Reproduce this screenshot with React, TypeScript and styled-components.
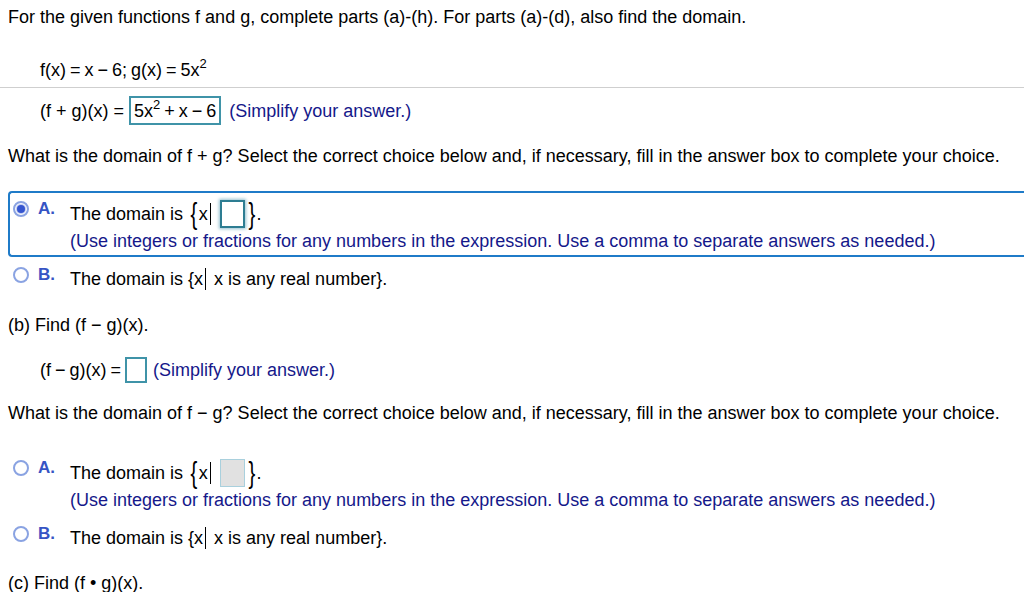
import styled, { createGlobalStyle } from "styled-components";

const GlobalStyle = createGlobalStyle`
  body {
    margin: 0;
    background: #fff;
    overflow: hidden;
    font-family: "Liberation Sans", Arial, Helvetica, sans-serif;
    color: #000;
  }
`;

const Page = styled.div`
  width: 1060px;
  padding-top: 8px;
  font-size: 18px;
  line-height: 20px;
  display: flex;
  flex-direction: column;
`;

const TextRow = styled.div<{ $indent?: number; $top?: number; $h?: number }>`
  display: flex;
  align-items: center;
  height: ${(p) => p.$h ?? 18}px;
  padding-left: ${(p) => p.$indent ?? 8}px;
  margin-top: ${(p) => p.$top ?? 0}px;
  white-space: pre;
`;

const Math = styled.span<{ $tight?: boolean }>`
  word-spacing: ${(p) => (p.$tight ? "-1px" : "0")};
`;

const Sup = styled.sup`
  font-size: 13px;
  line-height: 0;
  vertical-align: 8px;
`;

const Divider = styled.div`
  height: 1px;
  background: #cfcfcf;
  margin-top: 8px;
`;

const Hint = styled.span`
  color: #15188a;
`;

type BoxState = "filled" | "focus" | "empty" | "off";

const AnswerBox = styled.span<{ $state: BoxState; $w?: number }>`
  display: inline-flex;
  align-items: center;
  box-sizing: border-box;
  height: ${(p) => (p.$state === "filled" ? 29 : p.$state === "empty" ? 26 : 28)}px;
  min-width: ${(p) => p.$w ?? 22}px;
  padding: 0 3px;
  margin: ${(p) => {
    if (p.$state === "filled") return "0 8px 0 5px";
    if (p.$state === "empty") return "0 6px 0 4px";
    return "0 1px 0 0";
  }};
  border: ${(p) =>
    p.$state === "off" ? "1px solid #a9d0dd" : p.$state === "focus" ? "2px solid #2d7d92" : "2px solid #3f93a8"};
  background: ${(p) => (p.$state === "off" ? "#e1e1e1" : "#fff")};
  box-shadow: ${(p) => (p.$state === "focus" ? "0 0 3px 1px rgba(60, 140, 170, 0.55)" : "none")};
`;

const ChoiceList = styled.div<{ $top: number }>`
  display: flex;
  flex-direction: column;
  margin-top: ${(p) => p.$top}px;
`;

const Choice = styled.div<{ $selected?: boolean }>`
  display: flex;
  align-items: flex-start;
  margin-left: 8px;
  padding: 5px 0 5px 2px;
  border: 2px solid ${(p) => (p.$selected ? "#1f7bc8" : "transparent")};
  border-right: none;
  border-radius: 4px 0 0 4px;
`;

const Marker = styled.div`
  display: flex;
  align-items: center;
  height: 22px;
  width: 58px;
  flex-shrink: 0;
`;

const Radio = styled.span<{ $checked?: boolean }>`
  box-sizing: border-box;
  width: 16px;
  height: 16px;
  margin-left: 1px;
  border-radius: 50%;
  border: 2px solid #8aa3e2;
  background: #fff;
  display: flex;
  align-items: center;
  justify-content: center;
  &::after {
    content: "";
    width: 8px;
    height: 8px;
    border-radius: 50%;
    background: ${(p) => (p.$checked ? "#3555cf" : "transparent")};
    box-shadow: ${(p) => (p.$checked ? "0 0 1px 1px rgba(55, 86, 207, 0.35)" : "none")};
  }
`;

const Letter = styled.span`
  margin-left: 9px;
  font-weight: 700;
  color: #3654c4;
  font-size: 17px;
`;

const Body = styled.div`
  display: flex;
  flex-direction: column;
`;

const Line = styled.div<{ $h: number; $top: number }>`
  display: flex;
  align-items: center;
  height: ${(p) => p.$h}px;
  margin-top: ${(p) => p.$top}px;
  white-space: pre;
`;

const Brace = styled.span`
  font-size: 29px;
  font-weight: 300;
  line-height: 30px;
  transform: scaleX(0.7);
  display: inline-block;
  margin: 0 0 0 1px;
`;

const Bar = styled.span<{ $h?: number; $gap?: number }>`
  display: inline-block;
  width: 1px;
  height: ${(p) => p.$h ?? 22}px;
  background: #000;
  margin: 0 ${(p) => p.$gap ?? 9}px 0 2px;
`;

type DomainProps = { selected?: boolean; top: number; boxState: "focus" | "off" };

const DomainChoices = ({ selected, top, boxState }: DomainProps) => (
  <ChoiceList $top={top}>
    <Choice $selected={selected}>
      <Marker>
        <Radio $checked={selected} />
        <Letter>A.</Letter>
      </Marker>
      <Body>
        <Line $h={30} $top={1}>
          The domain is <Brace>{"{"}</Brace>x<Bar />
          <AnswerBox $state={boxState} $w={25} />
          <Brace>{"}"}</Brace>.
        </Line>
        <Line $h={18} $top={3}>
          <Hint>
            (Use integers or fractions for any numbers in the expression. Use a comma to separate answers as needed.)
          </Hint>
        </Line>
      </Body>
    </Choice>
    <Choice>
      <Marker>
        <Radio />
        <Letter>B.</Letter>
      </Marker>
      <Body>
        <Line $h={22} $top={4}>
          The domain is {"{"}x<Bar $h={22} $gap={3} /> x is any real number{"}"}.
        </Line>
      </Body>
    </Choice>
  </ChoiceList>
);

const App = () => {
  return (
    <>
      <GlobalStyle />
      <Page>
        <TextRow>
          For the given functions f and g, complete parts (a)-(h). For parts (a)-(d), also find the domain.
        </TextRow>
        <TextRow $indent={40} $top={35}>
          <Math $tight>
            f(x) = x − 6; g(x) = 5x<Sup>2</Sup>
          </Math>
        </TextRow>
        <Divider />
        <TextRow $indent={40} $top={8} $h={29}>
          <Math>(f + g)(x) =</Math>
          <AnswerBox $state="filled">
            <Math $tight>
              5x<Sup>2</Sup> + x − 6
            </Math>
          </AnswerBox>
          <Hint>(Simplify your answer.)</Hint>
        </TextRow>
        <TextRow $top={22}>
          What is the domain of f + g? Select the correct choice below and, if necessary, fill in the answer box to
          complete your choice.
        </TextRow>
        <DomainChoices selected top={26} boxState="focus" />
        <TextRow $top={19}>(b) Find (f − g)(x).</TextRow>
        <TextRow $indent={40} $top={23} $h={26}>
          <Math $tight>(f − g)(x) =</Math>
          <AnswerBox $state="empty" />
          <Hint>(Simplify your answer.)</Hint>
        </TextRow>
        <TextRow $top={21}>
          What is the domain of f − g? Select the correct choice below and, if necessary, fill in the answer box to
          complete your choice.
        </TextRow>
        <DomainChoices top={28} boxState="off" />
        <TextRow $top={18}>(c) Find (f • g)(x).</TextRow>
      </Page>
    </>
  );
};

export default App;
